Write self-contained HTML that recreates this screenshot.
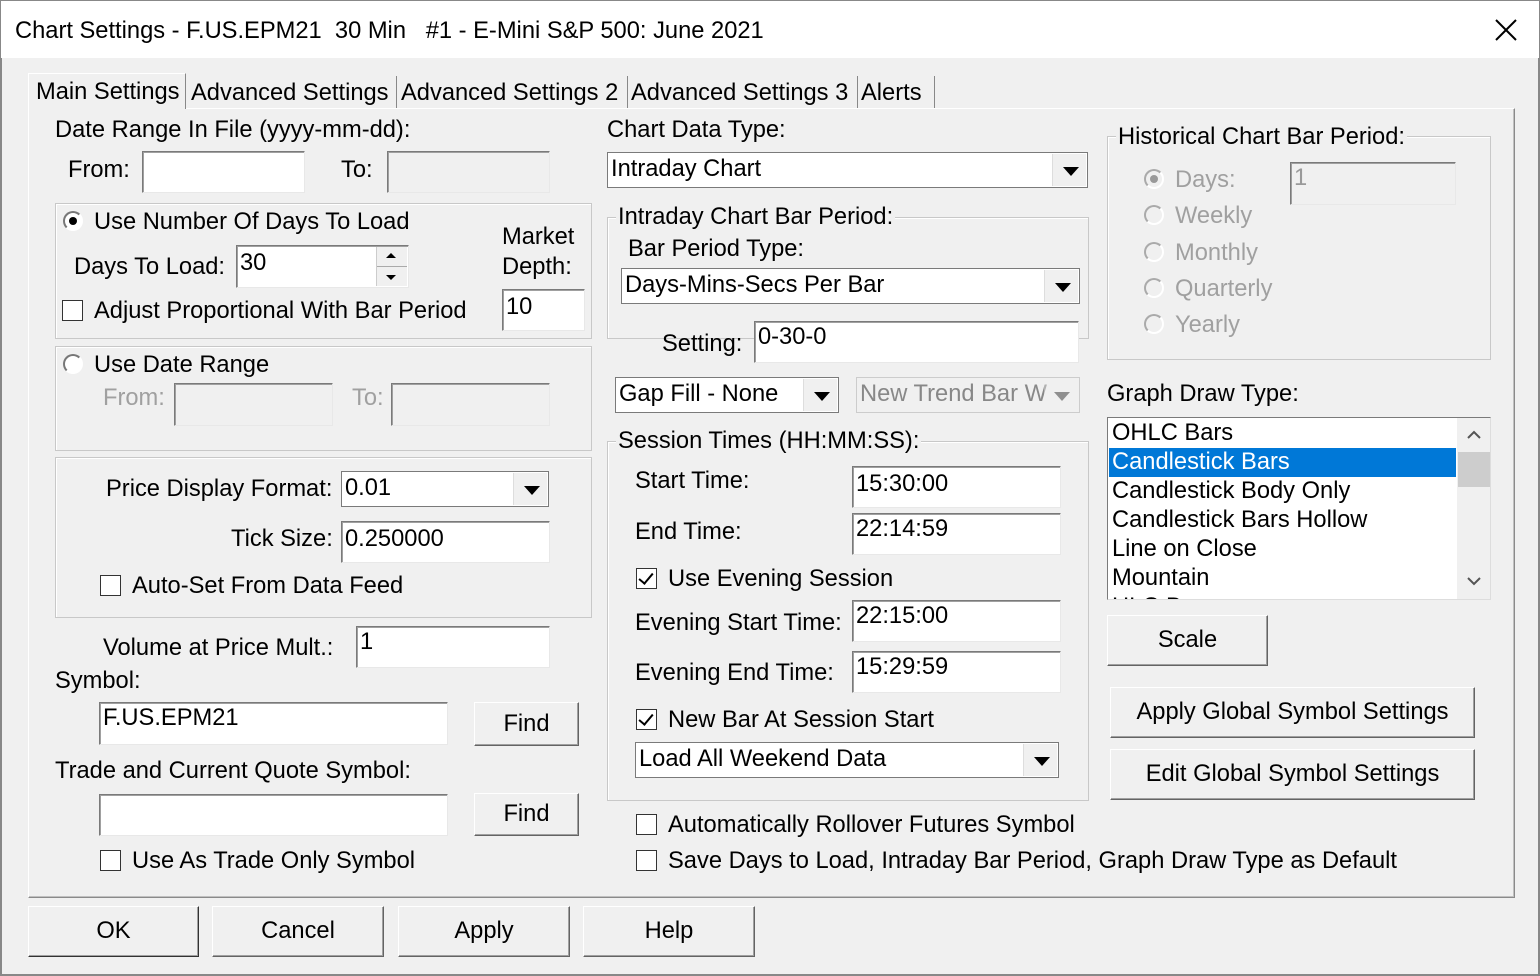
<!DOCTYPE html>
<html><head><meta charset="utf-8"><style>
*{box-sizing:border-box;margin:0;padding:0}
body{width:1540px;height:976px;background:#f0f0f0;font-family:"Liberation Sans",sans-serif;font-size:23.7px;color:#000;position:relative;overflow:hidden}
div,span{position:absolute}
.t{line-height:26px;white-space:nowrap}
.g{color:#a0a0a0}
.in{background:#fff;border:1px solid;border-color:#7a7a7a #e8e8e8 #e8e8e8 #7a7a7a;box-shadow:inset 1px 1px 0 #a0a0a0;padding:2px 3px;line-height:30px;white-space:nowrap;overflow:hidden}
.dis{background:#f0f0f0}
.cb{background:#fff;border:1px solid #7a7a7a;line-height:32px;padding-left:3px;white-space:nowrap;overflow:hidden}
.cb .ar{right:1px;top:1px;bottom:1px;width:34px;background:#f0f0f0;border-left:1px solid #ddd}
.ar:after{content:"";position:absolute;left:10px;top:13px;border-left:8px solid transparent;border-right:8px solid transparent;border-top:9px solid #000}
.grp{border:1px solid #c8c8c8;box-shadow:1px 1px 0 #fff inset}
.lg{background:#f0f0f0;padding:0 2px;line-height:26px;white-space:nowrap}
.btn{border:1px solid;border-color:#fff #646464 #646464 #fff;box-shadow:inset -1px -1px 0 #a0a0a0;text-align:center;background:#f0f0f0}
.chk{width:21px;height:21px;border:1px solid #333;background:#fff}
.chk.on:after{content:"";position:absolute;left:5px;top:1px;width:6px;height:12px;border-right:2px solid #000;border-bottom:2px solid #000;transform:rotate(40deg)}
.rad{width:20px;height:20px;border-radius:50%;background:#fff;border:2px solid;border-color:#777 #fff #fff #777}
.rad.on:after{content:"";position:absolute;left:4px;top:4px;width:8px;height:8px;border-radius:50%;background:#000}
.rad.dim{background:#f0f0f0;border-color:#aaa #fff #fff #aaa}
.rad.dim.on:after{background:#999}
.tab{top:76px;height:32px;line-height:34px;padding:0 3px;border-right:1px solid #888;white-space:nowrap;overflow:hidden}
</style></head><body>
<div style="left:0;top:0;width:1540px;height:58px;background:#fff;border:1px solid #888;border-bottom:none"></div>
<div class="t" style="left:15px;top:18px;font-size:23.7px">Chart Settings - F.US.EPM21&nbsp; 30 Min&nbsp; &nbsp;#1 - E-Mini S&amp;P 500: June 2021</div>
<svg style="position:absolute;left:1495px;top:19px" width="22" height="22"><path d="M1 1L21 21M21 1L1 21" stroke="#000" stroke-width="2"/></svg>
<div style="left:0;top:58px;width:2px;height:918px;background:#888"></div>
<div style="right:0;top:58px;width:2px;height:918px;background:#888"></div>
<div style="left:0;bottom:0;width:1540px;height:2px;background:#888"></div>

<div style="left:28px;top:108px;width:1487px;height:790px;border:1px solid;border-color:#fff #8a8a8a #8a8a8a #fff;box-shadow:inset -1px -1px 0 #c0c0c0"></div>
<div class="tab" style="left:28px;top:73px;height:36px;width:158px;border-left:1px solid #fff;border-top:1px solid #fff;background:#f0f0f0;padding-left:7px;line-height:36px">Main Settings</div>
<div class="tab" style="left:188px;width:209px">Advanced Settings</div>
<div class="tab" style="left:398px;width:230px">Advanced Settings 2</div>
<div class="tab" style="left:628px;width:230px">Advanced Settings 3</div>
<div class="tab" style="left:858px;width:77px">Alerts</div>

<div class="t" style="left:55px;top:117px">Date Range In File (yyyy-mm-dd):</div>
<div class="t" style="left:68px;top:157px">From:</div>
<div class="in" style="left:142px;top:151px;width:163px;height:42px"></div>
<div class="t" style="left:341px;top:157px">To:</div>
<div class="in dis" style="left:387px;top:151px;width:163px;height:42px"></div>

<div class="grp" style="left:55px;top:203px;width:537px;height:136px"></div>
<div class="rad on" style="left:63px;top:211px"></div>
<div class="t" style="left:94px;top:209px">Use Number Of Days To Load</div>
<div class="t" style="left:74px;top:254px">Days To Load:</div>
<div class="in" style="left:236px;top:245px;width:173px;height:43px;line-height:34px;padding-top:0">30</div>
<div style="left:376px;top:247px;width:31px;height:39px;background:#f0f0f0;border-left:1px solid #ccc"></div>
<div style="left:386px;top:253px;border-left:5px solid transparent;border-right:5px solid transparent;border-bottom:5px solid #000"></div>
<div style="left:377px;top:266px;width:30px;height:1px;background:#aaa"></div>
<div style="left:386px;top:275px;border-left:5px solid transparent;border-right:5px solid transparent;border-top:5px solid #000"></div>
<div class="t" style="left:502px;top:224px">Market</div>
<div class="t" style="left:502px;top:254px">Depth:</div>
<div class="chk" style="left:62px;top:300px"></div>
<div class="t" style="left:94px;top:298px">Adjust Proportional With Bar Period</div>
<div class="in" style="left:502px;top:289px;width:83px;height:42px;line-height:30px">10</div>

<div class="grp" style="left:55px;top:346px;width:537px;height:105px"></div>
<div class="rad" style="left:63px;top:354px"></div>
<div class="t" style="left:94px;top:352px">Use Date Range</div>
<div class="t g" style="left:103px;top:385px">From:</div>
<div class="in dis" style="left:174px;top:383px;width:159px;height:43px"></div>
<div class="t g" style="left:352px;top:385px">To:</div>
<div class="in dis" style="left:391px;top:383px;width:159px;height:43px"></div>

<div class="grp" style="left:55px;top:457px;width:537px;height:161px"></div>
<div class="t" style="left:106px;top:476px">Price Display Format:</div>
<div class="cb" style="left:341px;top:471px;width:208px;height:36px">0.01<div class="ar"></div></div>
<div class="t" style="left:231px;top:526px">Tick Size:</div>
<div class="in" style="left:341px;top:521px;width:209px;height:42px">0.250000</div>
<div class="chk" style="left:100px;top:575px"></div>
<div class="t" style="left:132px;top:573px">Auto-Set From Data Feed</div>

<div class="t" style="left:103px;top:635px">Volume at Price Mult.:</div>
<div class="in" style="left:356px;top:626px;width:194px;height:42px;padding-top:0">1</div>
<div class="t" style="left:55px;top:668px">Symbol:</div>
<div class="in" style="left:99px;top:702px;width:349px;height:43px;padding-top:0">F.US.EPM21</div>
<div class="btn" style="left:474px;top:702px;width:105px;height:44px;line-height:42px">Find</div>
<div class="t" style="left:55px;top:758px">Trade and Current Quote Symbol:</div>
<div class="in" style="left:99px;top:794px;width:349px;height:42px"></div>
<div class="btn" style="left:474px;top:793px;width:105px;height:43px;line-height:41px">Find</div>
<div class="chk" style="left:100px;top:850px"></div>
<div class="t" style="left:132px;top:848px">Use As Trade Only Symbol</div>

<div class="t" style="left:607px;top:117px">Chart Data Type:</div>
<div class="cb" style="left:607px;top:152px;width:481px;height:36px">Intraday Chart<div class="ar"></div></div>
<div class="grp" style="left:607px;top:217px;width:482px;height:122px"></div>
<div class="lg" style="left:616px;top:204px">Intraday Chart Bar Period:</div>
<div class="t" style="left:628px;top:236px">Bar Period Type:</div>
<div class="cb" style="left:621px;top:268px;width:459px;height:36px">Days-Mins-Secs Per Bar<div class="ar"></div></div>
<div class="t" style="left:662px;top:331px">Setting:</div>
<div class="in" style="left:754px;top:321px;width:325px;height:42px;padding-top:0">0-30-0</div>
<div class="cb" style="left:615px;top:377px;width:224px;height:36px">Gap Fill - None<div class="ar"></div></div>
<div class="cb" style="left:856px;top:377px;width:224px;height:36px;background:#f0f0f0;color:#888;border-color:#ccc">New Trend Bar W<div class="ar" style="border:none;opacity:.4"></div></div>

<div class="grp" style="left:607px;top:441px;width:482px;height:360px"></div>
<div class="lg" style="left:616px;top:428px">Session Times (HH:MM:SS):</div>
<div class="t" style="left:635px;top:468px">Start Time:</div>
<div class="in" style="left:852px;top:466px;width:209px;height:42px">15:30:00</div>
<div class="t" style="left:635px;top:519px">End Time:</div>
<div class="in" style="left:852px;top:513px;width:209px;height:42px;padding-top:0">22:14:59</div>
<div class="chk on" style="left:636px;top:568px"></div>
<div class="t" style="left:668px;top:566px">Use Evening Session</div>
<div class="t" style="left:635px;top:610px">Evening Start Time:</div>
<div class="in" style="left:852px;top:600px;width:209px;height:42px;padding-top:0">22:15:00</div>
<div class="t" style="left:635px;top:660px">Evening End Time:</div>
<div class="in" style="left:852px;top:651px;width:209px;height:42px;padding-top:0">15:29:59</div>
<div class="chk on" style="left:636px;top:709px"></div>
<div class="t" style="left:668px;top:707px">New Bar At Session Start</div>
<div class="cb" style="left:635px;top:742px;width:424px;height:36px">Load All Weekend Data<div class="ar"></div></div>

<div class="chk" style="left:636px;top:814px"></div>
<div class="t" style="left:668px;top:812px">Automatically Rollover Futures Symbol</div>
<div class="chk" style="left:636px;top:850px"></div>
<div class="t" style="left:668px;top:848px">Save Days to Load, Intraday Bar Period, Graph Draw Type as Default</div>

<div class="grp" style="left:1107px;top:136px;width:384px;height:224px"></div>
<div class="lg" style="left:1116px;top:124px">Historical Chart Bar Period:</div>
<div class="rad dim on" style="left:1144px;top:169px"></div><div class="t g" style="left:1175px;top:167px">Days:</div>
<div class="in dis" style="left:1290px;top:162px;width:166px;height:43px;color:#999;padding-top:0">1</div>
<div class="rad dim" style="left:1144px;top:205px"></div><div class="t g" style="left:1175px;top:203px">Weekly</div>
<div class="rad dim" style="left:1144px;top:242px"></div><div class="t g" style="left:1175px;top:240px">Monthly</div>
<div class="rad dim" style="left:1144px;top:278px"></div><div class="t g" style="left:1175px;top:276px">Quarterly</div>
<div class="rad dim" style="left:1144px;top:314px"></div><div class="t g" style="left:1175px;top:312px">Yearly</div>

<div class="t" style="left:1107px;top:381px">Graph Draw Type:</div>
<div style="left:1107px;top:417px;width:384px;height:183px;background:#fff;border:1px solid;border-color:#7a7a7a #ddd #ddd #7a7a7a;overflow:hidden">
 <div style="left:1px;top:30px;width:347px;height:29px;background:#0078d7"></div>
 <div class="t" style="left:4px;top:1px;line-height:29px">OHLC Bars<br><span style="position:static;color:#fff">Candlestick Bars</span><br>Candlestick Body Only<br>Candlestick Bars Hollow<br>Line on Close<br>Mountain<br>HLC Bars</div>
 <div style="left:349px;top:0;width:34px;height:183px;background:#f0f0f0"></div>
 <div style="left:350px;top:34px;width:32px;height:35px;background:#cdcdcd"></div>
 <svg style="position:absolute;left:358px;top:12px" width="16" height="10"><path d="M2 8L8 2L14 8" stroke="#555" stroke-width="2" fill="none"/></svg>
 <svg style="position:absolute;left:358px;top:158px" width="16" height="10"><path d="M2 2L8 8L14 2" stroke="#555" stroke-width="2" fill="none"/></svg>
</div>
<div class="btn" style="left:1107px;top:615px;width:161px;height:51px;line-height:49px">Scale</div>
<div class="btn" style="left:1110px;top:687px;width:365px;height:51px;line-height:49px">Apply Global Symbol Settings</div>
<div class="btn" style="left:1110px;top:749px;width:365px;height:51px;line-height:49px">Edit Global Symbol Settings</div>

<div class="btn" style="left:28px;top:906px;width:171px;height:51px;line-height:49px;border-color:#fff #333 #333 #fff">OK</div>
<div class="btn" style="left:212px;top:906px;width:172px;height:51px;line-height:49px">Cancel</div>
<div class="btn" style="left:398px;top:906px;width:172px;height:51px;line-height:49px">Apply</div>
<div class="btn" style="left:583px;top:906px;width:172px;height:51px;line-height:49px">Help</div>
</body></html>
